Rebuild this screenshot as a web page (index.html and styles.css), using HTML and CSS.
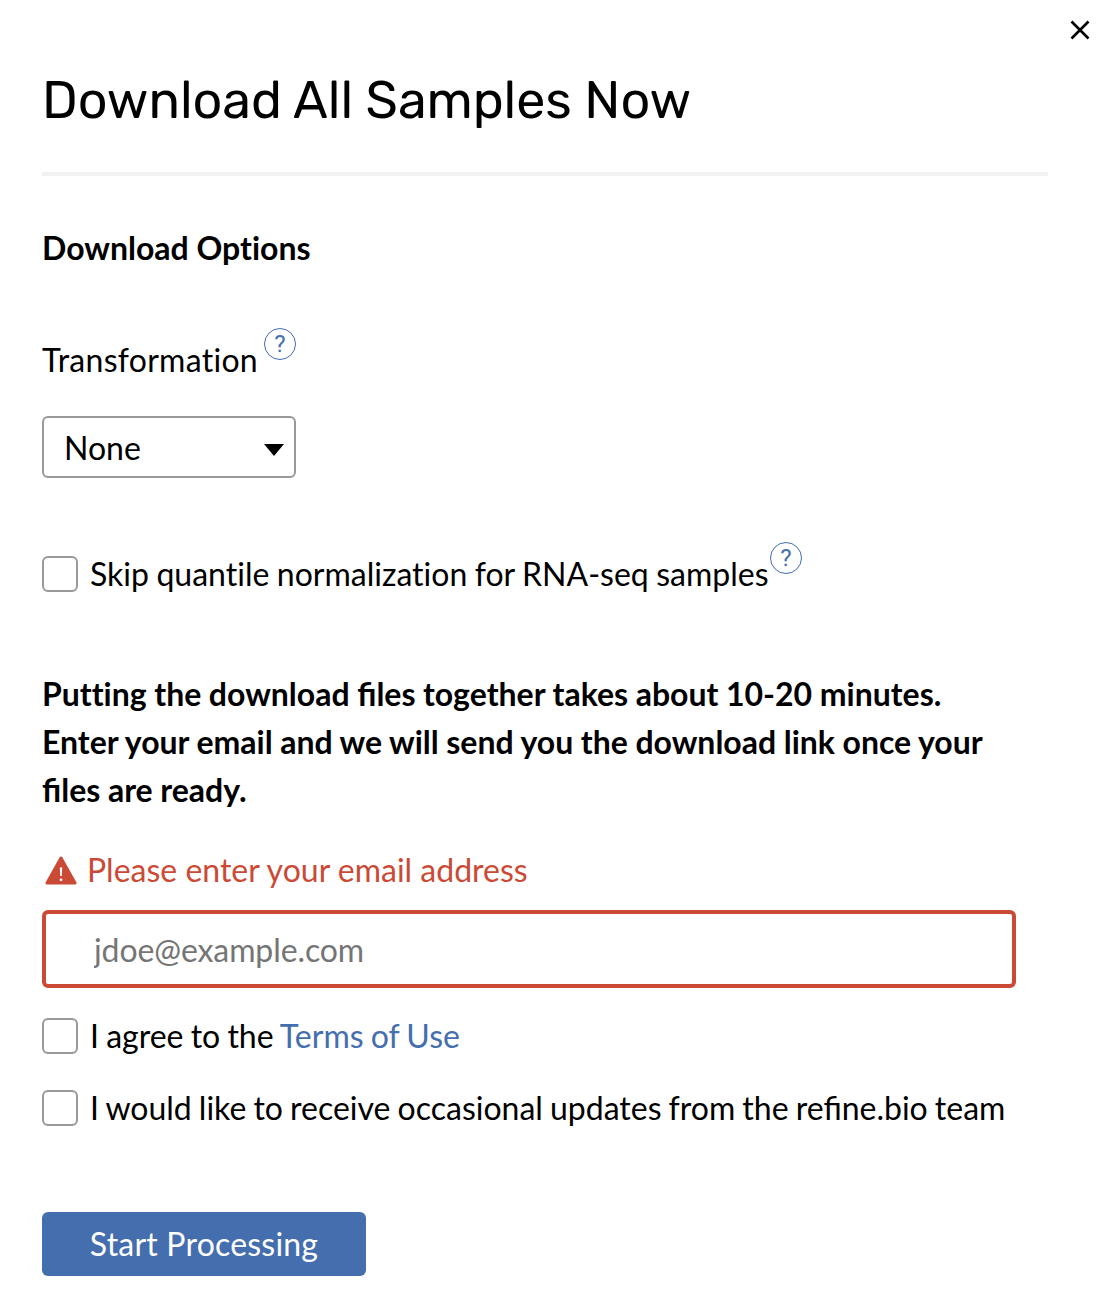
FILE: index.html
```html
<!DOCTYPE html>
<html lang="en">
<head>
<meta charset="utf-8">
<title>Download All Samples Now</title>
<link rel="stylesheet" href="styles.css">
</head>
<body>
<main class="modal">
  <button class="close" aria-label="Close"><svg width="20" height="20" viewBox="0 0 20 20"><path d="M1.5 1.5l17 17M18.5 1.5l-17 17" stroke="#000" stroke-width="2.6"/></svg></button>
  <h1 class="title">Download All Samples Now</h1>
  <h2 class="subtitle">Download Options</h2>
  <div class="option">
    <span class="label">Transformation</span>
    <span class="help">?</span>
  </div>
  <div class="select"><span>None</span><svg width="20" height="12" viewBox="0 0 20 12"><path d="M0 0h20L10 12z"/></svg></div>
  <label class="check skip"><span class="box"></span><span class="skip-text">Skip quantile normalization for RNA-seq samples</span><span class="help">?</span></label>
  <p class="notice">Putting the download <span class="lig">files</span> together takes about 10-20 minutes.<br>Enter your email and we will send you the download link once your<br><span class="lig">files</span> are ready.</p>
  <div class="error"><svg width="32" height="29" viewBox="0 0 32 29"><path d="M16 2L30 27H2z" fill="#cb4a36" stroke="#cb4a36" stroke-width="3" stroke-linejoin="round"/><path d="M14.8 11.5h2.4l-.4 8.5h-1.6z" fill="#fff"/><circle cx="16" cy="23.8" r="1.4" fill="#fff"/></svg><span class="error-text">Please enter your email address</span></div>
  <input class="email" type="email" placeholder="jdoe@example.com">
  <label class="check"><span class="box"></span><span class="terms-text">I agree to the <a class="link">Terms of Use</a></span></label>
  <label class="check"><span class="box"></span><span class="updates-text">I would like to receive occasional updates from the <span class="lig">refine.bio</span> team</span></label>
  <button class="submit">Start Processing</button>
</main>
</body>
</html>
```
FILE: styles.css
```css
* { box-sizing: border-box; }
body { margin: 0; background: #fff; color: #000; font: 32px/48px Lato, sans-serif; font-variant-ligatures: none; }
.lig { font-variant-ligatures: common-ligatures; }
.modal { position: relative; height: 1316px; padding: 64px 62px 40px 42px; display: flex; flex-direction: column; align-items: flex-start; white-space: nowrap; overflow: hidden; }
.close { position: absolute; top: 20px; right: 20px; width: 20px; height: 20px; padding: 0; border: 0; background: none; }
.close svg { display: block; }
.title { width: 1006px; height: 112px; margin: 0; border-bottom: 4px solid #f2f2f2; font: 400 52px/72px Rubik, Roboto, sans-serif; letter-spacing: -0.07px; }
.subtitle { margin: 48px 0 0; font-size: 32px; line-height: 48px; }
.option { display: flex; margin-top: 56px; height: 64px; padding-top: 8px; }
.label { width: 215px; letter-spacing: 0.28px; }
.help { flex: none; width: 32px; height: 32px; border: 1.5px solid #446eae; border-radius: 50%; color: #446eae; font: 24px/30px Roboto, sans-serif; text-align: center; }
.option .help { margin: -8px 0 0 7px; }
.select { display: flex; align-items: center; justify-content: space-between; width: 254px; height: 62px; margin-top: 24px; padding: 2px 10px 0 20px; border: 2px solid #999; border-radius: 6px; }
.select svg { margin-top: 3px; }
.check { display: flex; align-items: center; height: 48px; margin-top: 24px; }
.box { flex: none; width: 36px; height: 36px; margin-right: 12px; border: 2px solid #999; border-radius: 6px; }
.skip { margin-top: 72px; }
.skip-text { width: 679px; word-spacing: -0.7px; }
.skip .help { margin: -32px 0 0 1px; }
.notice { margin: 72px 0 0; font-weight: 700; word-spacing: -0.2px; }
.error { display: flex; align-items: center; margin-top: 32px; color: #cb4a36; }
.error svg { margin: 1px 10px 0 3px; }
.email { width: 974px; height: 78px; margin-top: 16px; padding: 0 48px; border: 4px solid #cb4a36; border-radius: 6px; font: 32px/48px Lato, sans-serif; letter-spacing: -0.1px; }
.email::placeholder { color: #757575; }
.terms-text { word-spacing: -1px; }
.updates-text { word-spacing: -1.1px; }
.link { color: #446eae; }
.submit { width: 324px; height: 64px; margin-top: 80px; padding: 0; border: 0; border-radius: 6px; background: #446eae; color: #fff; font: 32px/48px Lato, sans-serif; letter-spacing: 0.2px; }
```
